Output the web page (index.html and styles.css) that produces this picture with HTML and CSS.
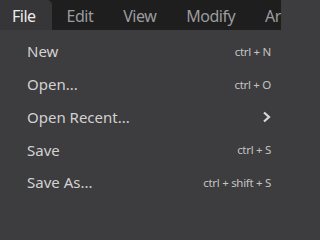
FILE: index.html
```html
<!DOCTYPE html>
<html>
<head>
<meta charset="utf-8">
<link rel="stylesheet" href="styles.css">
</head>
<body>
<div class="app">
  <nav class="menubar">
    <div class="tab active">File</div>
    <div class="tab">Edit</div>
    <div class="tab">View</div>
    <div class="tab">Modify</div>
    <div class="tab">Arrange</div>
  </nav>
  <ul class="menu">
    <li class="item"><span class="label">New</span><span class="shortcut">ctrl + N</span></li>
    <li class="item"><span class="label">Open...</span><span class="shortcut">ctrl + O</span></li>
    <li class="item"><span class="label">Open Recent...</span>
      <svg class="chevron" width="9" height="12" viewBox="0 0 9 12"><path d="M2 1.5 L7 6 L2 10.5" fill="none" stroke="#d8d8d8" stroke-width="2.2"/></svg>
    </li>
    <li class="item"><span class="label">Save</span><span class="shortcut">ctrl + S</span></li>
    <li class="item"><span class="label">Save As...</span><span class="shortcut">ctrl + shift + S</span></li>
  </ul>
</div>
</body>
</html>
```
FILE: styles.css
```css
html, body {
  margin: 0;
  padding: 0;
  background: #3d3c3e;
}
.app {
  width: 281px;
  height: 200px;
  overflow: hidden;
  font-family: "Noto Sans", sans-serif;
  background: #3d3c3e;
}
.menubar {
  display: flex;
  width: 281px;
  height: 30px;
  background: #1e1e1f;
  white-space: nowrap;
  overflow: hidden;
}
.tab {
  height: 30px;
  padding: 2px 15px 0 15px;
  line-height: 28px;
  font-size: 16px;
  letter-spacing: -0.5px;
  color: #9c9b9d;
  flex: none;
}
.tab.active {
  background: #363537;
  color: #ececec;
  border-top-right-radius: 5px;
  padding: 2px 16px 0 12px;
}
.menu {
  list-style: none;
  margin: 0;
  padding: 5px 0 0 0;
}
.item {
  display: flex;
  align-items: center;
  justify-content: space-between;
  height: 32.75px;
  padding: 0 10px 0 27px;
}
.label {
  font-size: 15px;
  color: #d2d2d2;
}
.shortcut {
  font-size: 11.5px;
  letter-spacing: -0.3px;
  color: #c4c4c4;
}
```
